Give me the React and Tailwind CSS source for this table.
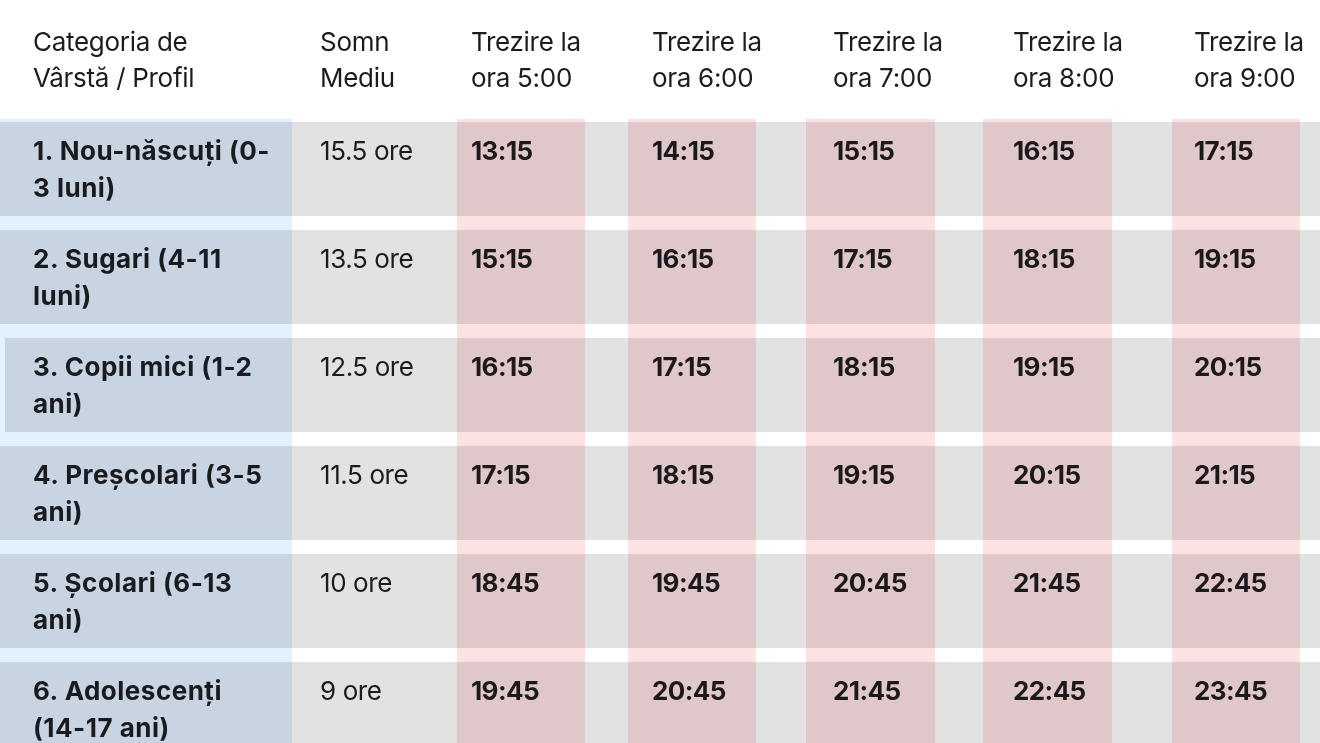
import React from "react";

const headers = [
  ["Categoria de", "Vârstă / Profil"],
  ["Somn", "Mediu"],
  ["Trezire la", "ora 5:00"],
  ["Trezire la", "ora 6:00"],
  ["Trezire la", "ora 7:00"],
  ["Trezire la", "ora 8:00"],
  ["Trezire la", "ora 9:00"],
];

const rows = [
  { cat: ["1. Nou-născuți (0-", "3 luni)"], somn: "15.5 ore", t: ["13:15", "14:15", "15:15", "16:15", "17:15"] },
  { cat: ["2. Sugari (4-11", "luni)"], somn: "13.5 ore", t: ["15:15", "16:15", "17:15", "18:15", "19:15"] },
  { cat: ["3. Copii mici (1-2", "ani)"], somn: "12.5 ore", t: ["16:15", "17:15", "18:15", "19:15", "20:15"], shift: true },
  { cat: ["4. Preșcolari (3-5", "ani)"], somn: "11.5 ore", t: ["17:15", "18:15", "19:15", "20:15", "21:15"] },
  { cat: ["5. Școlari (6-13", "ani)"], somn: "10 ore", t: ["18:45", "19:45", "20:45", "21:45", "22:45"] },
  { cat: ["6. Adolescenți", "(14-17 ani)"], somn: "9 ore", t: ["19:45", "20:45", "21:45", "22:45", "23:45"] },
];

const grid = "grid grid-cols-[320px_151px_181px_181px_180px_181px_126px]";
const strip = "h-full w-[128px] bg-[#fde2e4] mix-blend-multiply";

export default function App() {
  return (
    <div
      className="relative w-[1320px] h-[743px] overflow-hidden bg-white text-[#1c1c1f]"
      style={{ fontFamily: "Inter, 'Liberation Sans', sans-serif" }}
    >
      <div className={`${grid} pt-[24px] h-[122px] text-[26px] leading-[36px] tracking-[-0.3px]`}>
        {headers.map((h, i) => (
          <div key={i} className={`whitespace-nowrap ${i === 0 ? "pl-[33px]" : ""}`}>
            <div>{h[0]}</div>
            <div>{h[1]}</div>
          </div>
        ))}
      </div>
      <div className="flex flex-col gap-[14px]">
        {rows.map((r, i) => (
          <div
            key={i}
            className={`${grid} bg-[#e2e2e2] py-[10px] text-[26px] leading-[37px] whitespace-nowrap ${r.shift ? "ml-[5px]" : ""}`}
          >
            <div className={`font-bold tracking-[0.5px] ${r.shift ? "pl-[28px]" : "pl-[33px]"}`}>
              <div>{r.cat[0]}</div>
              <div>{r.cat[1]}</div>
            </div>
            <div className={`tracking-[-0.4px] ${r.shift ? "-ml-[5px]" : ""}`}>{r.somn}</div>
            {r.t.map((t, j) => (
              <div key={j} className={`font-bold tracking-[-0.6px] ${r.shift ? "-ml-[5px]" : ""}`}>
                {t}
              </div>
            ))}
          </div>
        ))}
      </div>
      <div className="pointer-events-none absolute inset-x-0 top-[119px] bottom-0 flex">
        <div className="h-full w-[292px] bg-[#e2f0ff] mix-blend-multiply" />
        <div className={`${strip} ml-[165px]`} />
        <div className={`${strip} ml-[43px]`} />
        <div className={`${strip} ml-[50px] w-[129px]`} />
        <div className={`${strip} ml-[48px] w-[129px]`} />
        <div className={`${strip} ml-[60px]`} />
      </div>
    </div>
  );
}
